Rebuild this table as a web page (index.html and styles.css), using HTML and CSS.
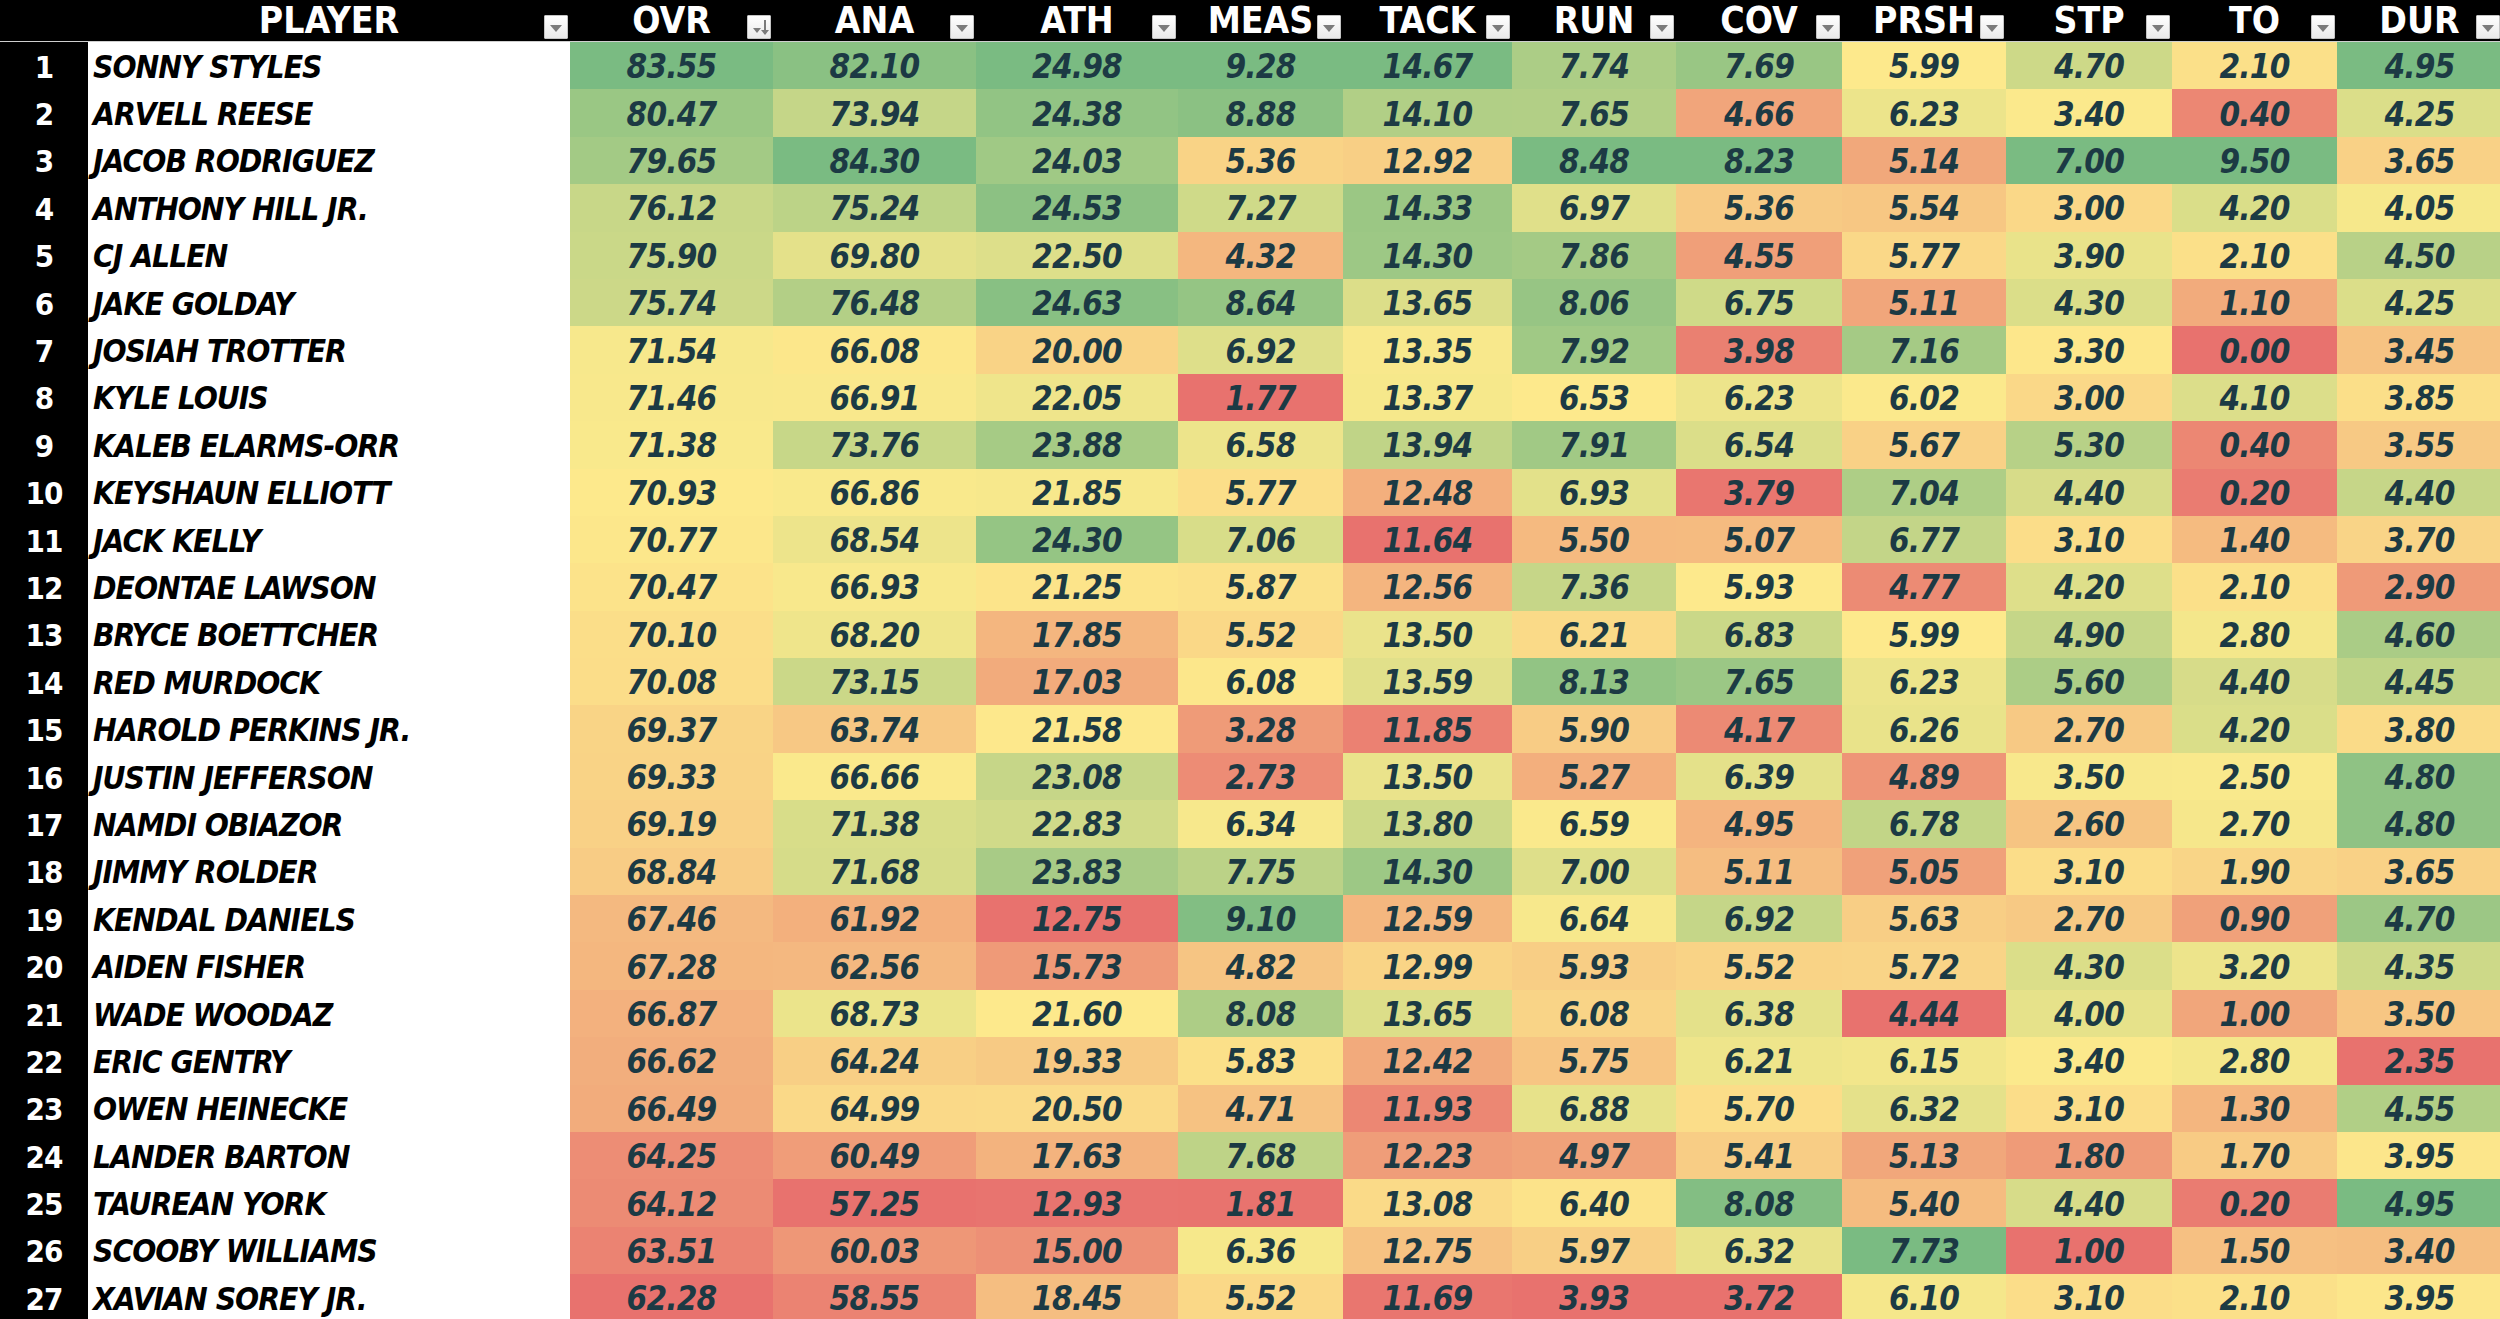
FILE: index.html
```html
<!DOCTYPE html>
<html>
<head>
<meta charset="utf-8">
<title>Big Board</title>
<link rel="stylesheet" href="styles.css">
</head>
<body>
<div class="sheet">
  <div class="hdr">
    <div class="h idx"></div>
    <div class="h"><span class="lbl">PLAYER</span><span class="btn"><i class="tri"></i></span></div>
    <div class="h"><span class="lbl">OVR</span><span class="btn sort"><i class="tri sm"></i><i class="arr"></i></span></div>
    <div class="h"><span class="lbl">ANA</span><span class="btn"><i class="tri"></i></span></div>
    <div class="h"><span class="lbl">ATH</span><span class="btn"><i class="tri"></i></span></div>
    <div class="h"><span class="lbl">MEAS</span><span class="btn"><i class="tri"></i></span></div>
    <div class="h"><span class="lbl">TACK</span><span class="btn"><i class="tri"></i></span></div>
    <div class="h"><span class="lbl">RUN</span><span class="btn"><i class="tri"></i></span></div>
    <div class="h"><span class="lbl">COV</span><span class="btn"><i class="tri"></i></span></div>
    <div class="h"><span class="lbl">PRSH</span><span class="btn"><i class="tri"></i></span></div>
    <div class="h"><span class="lbl">STP</span><span class="btn"><i class="tri"></i></span></div>
    <div class="h"><span class="lbl">TO</span><span class="btn"><i class="tri"></i></span></div>
    <div class="h"><span class="lbl">DUR</span><span class="btn"><i class="tri"></i></span></div>
  </div>
  <div class="body" id="body">
    <div class="row"><div class="rk">1</div><div class="nm">SONNY STYLES</div><div class="v">83.55</div><div class="v">82.10</div><div class="v">24.98</div><div class="v">9.28</div><div class="v">14.67</div><div class="v">7.74</div><div class="v">7.69</div><div class="v">5.99</div><div class="v">4.70</div><div class="v">2.10</div><div class="v">4.95</div></div>
    <div class="row"><div class="rk">2</div><div class="nm">ARVELL REESE</div><div class="v">80.47</div><div class="v">73.94</div><div class="v">24.38</div><div class="v">8.88</div><div class="v">14.10</div><div class="v">7.65</div><div class="v">4.66</div><div class="v">6.23</div><div class="v">3.40</div><div class="v">0.40</div><div class="v">4.25</div></div>
    <div class="row"><div class="rk">3</div><div class="nm">JACOB RODRIGUEZ</div><div class="v">79.65</div><div class="v">84.30</div><div class="v">24.03</div><div class="v">5.36</div><div class="v">12.92</div><div class="v">8.48</div><div class="v">8.23</div><div class="v">5.14</div><div class="v">7.00</div><div class="v">9.50</div><div class="v">3.65</div></div>
    <div class="row"><div class="rk">4</div><div class="nm">ANTHONY HILL JR.</div><div class="v">76.12</div><div class="v">75.24</div><div class="v">24.53</div><div class="v">7.27</div><div class="v">14.33</div><div class="v">6.97</div><div class="v">5.36</div><div class="v">5.54</div><div class="v">3.00</div><div class="v">4.20</div><div class="v">4.05</div></div>
    <div class="row"><div class="rk">5</div><div class="nm">CJ ALLEN</div><div class="v">75.90</div><div class="v">69.80</div><div class="v">22.50</div><div class="v">4.32</div><div class="v">14.30</div><div class="v">7.86</div><div class="v">4.55</div><div class="v">5.77</div><div class="v">3.90</div><div class="v">2.10</div><div class="v">4.50</div></div>
    <div class="row"><div class="rk">6</div><div class="nm">JAKE GOLDAY</div><div class="v">75.74</div><div class="v">76.48</div><div class="v">24.63</div><div class="v">8.64</div><div class="v">13.65</div><div class="v">8.06</div><div class="v">6.75</div><div class="v">5.11</div><div class="v">4.30</div><div class="v">1.10</div><div class="v">4.25</div></div>
    <div class="row"><div class="rk">7</div><div class="nm">JOSIAH TROTTER</div><div class="v">71.54</div><div class="v">66.08</div><div class="v">20.00</div><div class="v">6.92</div><div class="v">13.35</div><div class="v">7.92</div><div class="v">3.98</div><div class="v">7.16</div><div class="v">3.30</div><div class="v">0.00</div><div class="v">3.45</div></div>
    <div class="row"><div class="rk">8</div><div class="nm">KYLE LOUIS</div><div class="v">71.46</div><div class="v">66.91</div><div class="v">22.05</div><div class="v">1.77</div><div class="v">13.37</div><div class="v">6.53</div><div class="v">6.23</div><div class="v">6.02</div><div class="v">3.00</div><div class="v">4.10</div><div class="v">3.85</div></div>
    <div class="row"><div class="rk">9</div><div class="nm">KALEB ELARMS-ORR</div><div class="v">71.38</div><div class="v">73.76</div><div class="v">23.88</div><div class="v">6.58</div><div class="v">13.94</div><div class="v">7.91</div><div class="v">6.54</div><div class="v">5.67</div><div class="v">5.30</div><div class="v">0.40</div><div class="v">3.55</div></div>
    <div class="row"><div class="rk">10</div><div class="nm">KEYSHAUN ELLIOTT</div><div class="v">70.93</div><div class="v">66.86</div><div class="v">21.85</div><div class="v">5.77</div><div class="v">12.48</div><div class="v">6.93</div><div class="v">3.79</div><div class="v">7.04</div><div class="v">4.40</div><div class="v">0.20</div><div class="v">4.40</div></div>
    <div class="row"><div class="rk">11</div><div class="nm">JACK KELLY</div><div class="v">70.77</div><div class="v">68.54</div><div class="v">24.30</div><div class="v">7.06</div><div class="v">11.64</div><div class="v">5.50</div><div class="v">5.07</div><div class="v">6.77</div><div class="v">3.10</div><div class="v">1.40</div><div class="v">3.70</div></div>
    <div class="row"><div class="rk">12</div><div class="nm">DEONTAE LAWSON</div><div class="v">70.47</div><div class="v">66.93</div><div class="v">21.25</div><div class="v">5.87</div><div class="v">12.56</div><div class="v">7.36</div><div class="v">5.93</div><div class="v">4.77</div><div class="v">4.20</div><div class="v">2.10</div><div class="v">2.90</div></div>
    <div class="row"><div class="rk">13</div><div class="nm">BRYCE BOETTCHER</div><div class="v">70.10</div><div class="v">68.20</div><div class="v">17.85</div><div class="v">5.52</div><div class="v">13.50</div><div class="v">6.21</div><div class="v">6.83</div><div class="v">5.99</div><div class="v">4.90</div><div class="v">2.80</div><div class="v">4.60</div></div>
    <div class="row"><div class="rk">14</div><div class="nm">RED MURDOCK</div><div class="v">70.08</div><div class="v">73.15</div><div class="v">17.03</div><div class="v">6.08</div><div class="v">13.59</div><div class="v">8.13</div><div class="v">7.65</div><div class="v">6.23</div><div class="v">5.60</div><div class="v">4.40</div><div class="v">4.45</div></div>
    <div class="row"><div class="rk">15</div><div class="nm">HAROLD PERKINS JR.</div><div class="v">69.37</div><div class="v">63.74</div><div class="v">21.58</div><div class="v">3.28</div><div class="v">11.85</div><div class="v">5.90</div><div class="v">4.17</div><div class="v">6.26</div><div class="v">2.70</div><div class="v">4.20</div><div class="v">3.80</div></div>
    <div class="row"><div class="rk">16</div><div class="nm">JUSTIN JEFFERSON</div><div class="v">69.33</div><div class="v">66.66</div><div class="v">23.08</div><div class="v">2.73</div><div class="v">13.50</div><div class="v">5.27</div><div class="v">6.39</div><div class="v">4.89</div><div class="v">3.50</div><div class="v">2.50</div><div class="v">4.80</div></div>
    <div class="row"><div class="rk">17</div><div class="nm">NAMDI OBIAZOR</div><div class="v">69.19</div><div class="v">71.38</div><div class="v">22.83</div><div class="v">6.34</div><div class="v">13.80</div><div class="v">6.59</div><div class="v">4.95</div><div class="v">6.78</div><div class="v">2.60</div><div class="v">2.70</div><div class="v">4.80</div></div>
    <div class="row"><div class="rk">18</div><div class="nm">JIMMY ROLDER</div><div class="v">68.84</div><div class="v">71.68</div><div class="v">23.83</div><div class="v">7.75</div><div class="v">14.30</div><div class="v">7.00</div><div class="v">5.11</div><div class="v">5.05</div><div class="v">3.10</div><div class="v">1.90</div><div class="v">3.65</div></div>
    <div class="row"><div class="rk">19</div><div class="nm">KENDAL DANIELS</div><div class="v">67.46</div><div class="v">61.92</div><div class="v">12.75</div><div class="v">9.10</div><div class="v">12.59</div><div class="v">6.64</div><div class="v">6.92</div><div class="v">5.63</div><div class="v">2.70</div><div class="v">0.90</div><div class="v">4.70</div></div>
    <div class="row"><div class="rk">20</div><div class="nm">AIDEN FISHER</div><div class="v">67.28</div><div class="v">62.56</div><div class="v">15.73</div><div class="v">4.82</div><div class="v">12.99</div><div class="v">5.93</div><div class="v">5.52</div><div class="v">5.72</div><div class="v">4.30</div><div class="v">3.20</div><div class="v">4.35</div></div>
    <div class="row"><div class="rk">21</div><div class="nm">WADE WOODAZ</div><div class="v">66.87</div><div class="v">68.73</div><div class="v">21.60</div><div class="v">8.08</div><div class="v">13.65</div><div class="v">6.08</div><div class="v">6.38</div><div class="v">4.44</div><div class="v">4.00</div><div class="v">1.00</div><div class="v">3.50</div></div>
    <div class="row"><div class="rk">22</div><div class="nm">ERIC GENTRY</div><div class="v">66.62</div><div class="v">64.24</div><div class="v">19.33</div><div class="v">5.83</div><div class="v">12.42</div><div class="v">5.75</div><div class="v">6.21</div><div class="v">6.15</div><div class="v">3.40</div><div class="v">2.80</div><div class="v">2.35</div></div>
    <div class="row"><div class="rk">23</div><div class="nm">OWEN HEINECKE</div><div class="v">66.49</div><div class="v">64.99</div><div class="v">20.50</div><div class="v">4.71</div><div class="v">11.93</div><div class="v">6.88</div><div class="v">5.70</div><div class="v">6.32</div><div class="v">3.10</div><div class="v">1.30</div><div class="v">4.55</div></div>
    <div class="row"><div class="rk">24</div><div class="nm">LANDER BARTON</div><div class="v">64.25</div><div class="v">60.49</div><div class="v">17.63</div><div class="v">7.68</div><div class="v">12.23</div><div class="v">4.97</div><div class="v">5.41</div><div class="v">5.13</div><div class="v">1.80</div><div class="v">1.70</div><div class="v">3.95</div></div>
    <div class="row"><div class="rk">25</div><div class="nm">TAUREAN YORK</div><div class="v">64.12</div><div class="v">57.25</div><div class="v">12.93</div><div class="v">1.81</div><div class="v">13.08</div><div class="v">6.40</div><div class="v">8.08</div><div class="v">5.40</div><div class="v">4.40</div><div class="v">0.20</div><div class="v">4.95</div></div>
    <div class="row"><div class="rk">26</div><div class="nm">SCOOBY WILLIAMS</div><div class="v">63.51</div><div class="v">60.03</div><div class="v">15.00</div><div class="v">6.36</div><div class="v">12.75</div><div class="v">5.97</div><div class="v">6.32</div><div class="v">7.73</div><div class="v">1.00</div><div class="v">1.50</div><div class="v">3.40</div></div>
    <div class="row"><div class="rk">27</div><div class="nm">XAVIAN SOREY JR.</div><div class="v">62.28</div><div class="v">58.55</div><div class="v">18.45</div><div class="v">5.52</div><div class="v">11.69</div><div class="v">3.93</div><div class="v">3.72</div><div class="v">6.10</div><div class="v">3.10</div><div class="v">2.10</div><div class="v">3.95</div></div>
  </div>
</div>
<script src="script.js"></script>
</body>
</html>
```

FILE: styles.css
```css
html, body {
  margin: 0;
  padding: 0;
  background: #000;
  overflow: hidden;
}
.sheet {
  width: 2500px;
  font-family: "DejaVu Sans Condensed", "DejaVu Sans", sans-serif;
  font-stretch: condensed;
  font-weight: bold;
}
.hdr, .row {
  display: grid;
  grid-template-columns: 88px 482px 203px 203px 202px 165px 169px 164px 166px 164px 166px 165px 165px;
}
.hdr {
  height: 42px;
  background: #000;
  border-bottom: 1px solid #cfcfcf;
  box-sizing: border-box;
}
.h {
  position: relative;
  display: flex;
  justify-content: center;
  align-items: flex-start;
}
.lbl {
  color: #fff;
  font-size: 37px;
  line-height: 41px;
  height: 41px;
  letter-spacing: 0px;
}
.btn {
  position: absolute;
  right: 2px;
  top: 15px;
  width: 24px;
  height: 24px;
  box-sizing: border-box;
  border: 1px solid #c4c4c4;
  border-radius: 1px;
  background: linear-gradient(#ffffff, #e9e9e9);
  display: flex;
  align-items: center;
  justify-content: center;
  gap: 1px;
}
.tri {
  display: block;
  width: 0;
  height: 0;
  border-left: 6px solid transparent;
  border-right: 6px solid transparent;
  border-top: 7px solid #7b7b7b;
  margin-top: 2px;
}
.tri.sm {
  border-left-width: 4px;
  border-right-width: 4px;
  border-top-width: 5px;
  margin-top: 6px;
}
.arr {
  display: block;
  position: relative;
  width: 2px;
  height: 14px;
  background: #7b7b7b;
  margin-left: 2px;
}
.arr::after {
  content: "";
  position: absolute;
  left: -3px;
  bottom: -1px;
  border-left: 4px solid transparent;
  border-right: 4px solid transparent;
  border-top: 5px solid #7b7b7b;
}
.row {
  height: 47.4px;
}
.rk, .nm, .v {
  padding-top: 2px;
  box-sizing: border-box;
}
.rk {
  background: #000;
  color: #fff;
  font-size: 31px;
  display: flex;
  align-items: center;
  justify-content: center;
  letter-spacing: -1px;
}
.nm {
  background: #fff;
  color: #000;
  font-size: 31.5px;
  font-style: italic;
  letter-spacing: -1px;
  display: flex;
  align-items: center;
  padding-left: 5px;
  white-space: nowrap;
}
.v {
  color: #1c3a44;
  font-size: 33px;
  font-style: italic;
  letter-spacing: -0.8px;
  display: flex;
  align-items: center;
  justify-content: center;
  background: #fdea8c;
}
```

FILE: script.js
```js
(function () {
  // [min, mid, max] anchors for each stat column (3-colour scale)
  var scales = [
    [62.28, 71.0, 83.55],
    [57.25, 66.3, 84.30],
    [12.75, 21.7, 24.98],
    [1.77, 6.2, 9.28],
    [11.64, 13.3, 14.67],
    [3.93, 6.55, 8.48],
    [3.72, 5.95, 8.23],
    [4.44, 6.0, 7.73],
    [1.00, 3.35, 7.00],
    [0.00, 2.3, 9.50],
    [2.35, 4.0, 4.95]
  ];
  var red = [232, 114, 110];
  var yel = [253, 234, 140];
  var grn = [122, 187, 130];
  function mix(a, b, t) {
    return [0, 1, 2].map(function (i) { return Math.round(a[i] + (b[i] - a[i]) * t); });
  }
  var rows = document.querySelectorAll('.row');
  rows.forEach(function (row) {
    var cells = row.querySelectorAll('.v');
    cells.forEach(function (c, i) {
      var s = scales[i];
      var v = parseFloat(c.textContent);
      var col;
      if (v <= s[1]) {
        var t = Math.max(0, Math.min(1, (v - s[0]) / (s[1] - s[0])));
        col = mix(red, yel, t);
      } else {
        var t2 = Math.max(0, Math.min(1, (v - s[1]) / (s[2] - s[1])));
        col = mix(yel, grn, t2);
      }
      c.style.backgroundColor = 'rgb(' + col.join(',') + ')';
    });
  });
})();
```
